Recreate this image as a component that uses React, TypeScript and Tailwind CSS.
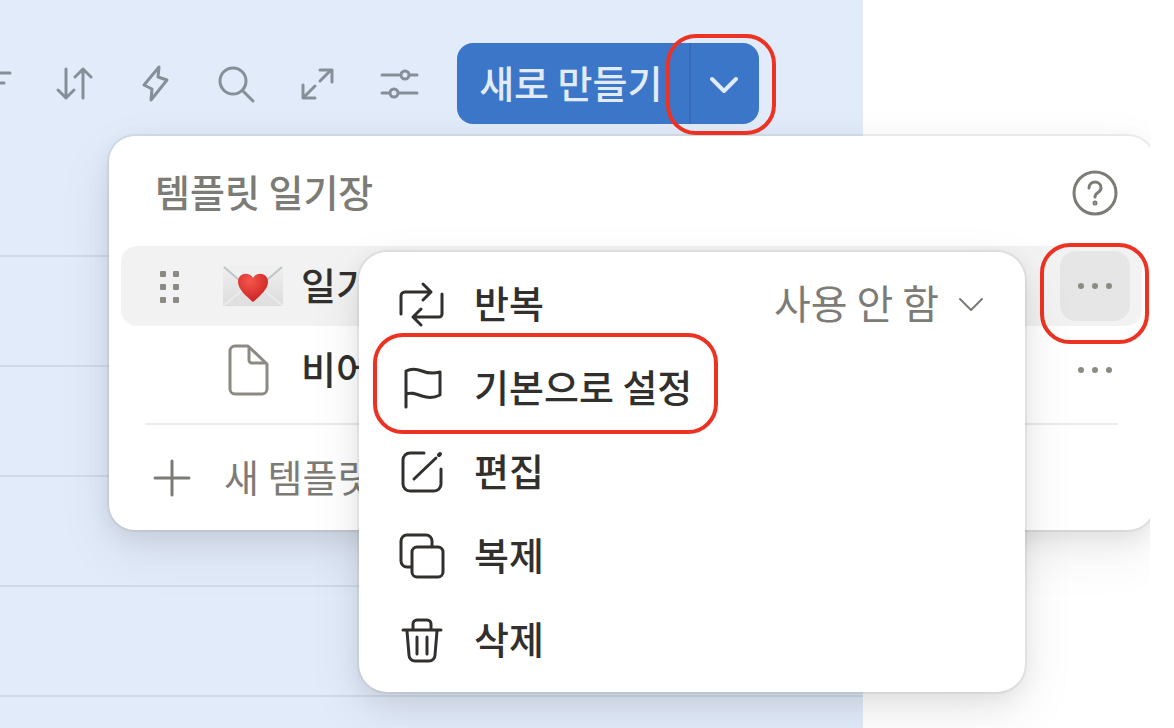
import { ReactNode } from "react";
import clsx from "clsx";

interface IconProps {
  size?: number;
  width?: number;
  className?: string;
  children: ReactNode;
}

const Icon = ({ size = 44, width = 3, className, children }: IconProps) => (
  <svg
    width={size}
    height={size}
    viewBox={`0 0 ${size} ${size}`}
    fill="none"
    stroke="currentColor"
    strokeWidth={width}
    strokeLinecap="round"
    strokeLinejoin="round"
    aria-hidden="true"
    className={clsx("shrink-0 overflow-visible", className)}
  >
    {children}
  </svg>
);

const toolbarItems = [
  { label: "필터", icon: <path d="M4 8h37M11 18h24M17 28h12" /> },
  {
    label: "정렬",
    icon: <path d="M15 4v29M7 25l8 8 8-8M32 33V4M24 12l8-8 8 8" />,
  },
  {
    label: "자동화",
    icon: <path d="M26 2L11 20l8 4-1 11 16-20-9-3z" />,
  },
  {
    label: "검색",
    icon: (
      <>
        <circle cx="18" cy="16" r="13" />
        <path d="M28 26l10 10" />
      </>
    ),
  },
  {
    label: "확대",
    icon: <path d="M23 16L34 5M23 5h12v12M18 21L7 32M6 20v13h12" />,
  },
  {
    label: "설정",
    icon: (
      <>
        <path d="M3 10h17M31 10h7M3 28h6M20 28h18" />
        <circle cx="26" cy="10" r="4" />
        <circle cx="15" cy="28" r="4" />
      </>
    ),
  },
];

const menuItems = [
  {
    label: "반복",
    value: "사용 안 함",
    icon: (
      <path d="M2 33V15a4 4 0 0 1 4-4h26M24 3l8 8-8 8M43 13v20a3 3 0 0 1-3 3H14M22 28l-8 8 8 8" />
    ),
  },
  {
    label: "기본으로 설정",
    marked: true,
    icon: (
      <path d="M7 42V6c6-3 11-2 16 0s11 3 18 1v23c-6 3-12 3-18 1s-10-4-16-2" />
    ),
  },
  {
    label: "편집",
    icon: (
      <>
        <path d="M25 4H11a7 7 0 0 0-7 7v24a7 7 0 0 0 7 7h24a7 7 0 0 0 7-7V20" />
        <path d="M15 30L37 9" />
        <path d="M40 6l1-1" strokeWidth="4" />
      </>
    ),
  },
  {
    label: "복제",
    icon: (
      <>
        <rect x="13" y="14" width="31" height="30" rx="5" />
        <path d="M33 13V8a6 6 0 0 0-6-6H8a6 6 0 0 0-6 6v20a6 6 0 0 0 6 6h4" />
      </>
    ),
  },
  {
    label: "삭제",
    icon: (
      <>
        <path d="M4 13h38M14 12V7a4 4 0 0 1 4-4h10a4 4 0 0 1 4 4v5" />
        <path d="M8 14l2 24a6 6 0 0 0 6 6h14a6 6 0 0 0 6-6l2-24M18 20v17M28 20v17" />
      </>
    ),
  },
];

const Highlight = ({ className }: { className: string }) => (
  <span
    className={clsx(
      "pointer-events-none absolute rounded-[30px] border-4 border-[#ec3323]",
      className,
    )}
  />
);

const LoveLetter = () => (
  <svg width="60" height="40" viewBox="0 0 60 40" aria-hidden="true">
    <defs>
      <radialGradient id="heart" cx="40%" cy="25%" r="80%">
        <stop offset="0" stopColor="#f4564c" />
        <stop offset="1" stopColor="#c9201f" />
      </radialGradient>
      <linearGradient id="paper" x1="0" y1="0" x2="0" y2="1">
        <stop offset="0" stopColor="#efefef" />
        <stop offset="1" stopColor="#dcdcdc" />
      </linearGradient>
    </defs>
    <rect width="60" height="40" rx="1" fill="url(#paper)" />
    <path d="M1 39l21-17h16l21 17z" fill="#e0e0e0" />
    <path d="M1 39l20-16M59 39L39 23" stroke="#ebebeb" strokeWidth="2" />
    <path d="M1 1l29 25L59 1z" fill="#f0f0f0" />
    <path d="M1 1l29 25L59 1" fill="none" stroke="#bfc6ca" strokeWidth="2" />
    <path
      d="M30 36C23 30 15 23 15 16c0-9 11-11 15-4 4-7 15-5 15 4 0 7-8 14-15 20z"
      fill="url(#heart)"
    />
  </svg>
);

const Dots = () => (
  <Icon size={36} className="text-[#8d8a84]">
    <g fill="currentColor" stroke="none">
      <circle cx="4" cy="18" r="3" />
      <circle cx="18" cy="18" r="3" />
      <circle cx="32" cy="18" r="3" />
    </g>
  </Icon>
);

const TemplatePanel = () => (
  <section className="absolute top-[136px] -right-1 left-[109px] z-10 rounded-[26px] bg-white p-3 text-[#7d7b75] shadow-[0_0_0_2px_rgba(84,72,49,0.08),0_8px_24px_rgba(15,15,15,0.08),0_20px_56px_rgba(15,15,15,0.08)]">
    <header className="flex h-[90px] items-center justify-between pr-[25px] pl-[34px]">
      <h2 className="pb-1 font-medium">템플릿 일기장</h2>
      <button type="button" aria-label="도움말">
        <Icon>
          <circle cx="22" cy="22" r="21" />
          <path d="M16 17c0-8 12-8 12 0 0 5-6 4-6 9" />
          <circle cx="22" cy="32" r="1" />
        </Icon>
      </button>
    </header>
    <ul className="mt-2 flex flex-col gap-1">
      <li className="flex h-20 items-center rounded-2xl bg-[#f2f2f2] pr-3 pl-[38px]">
        <Icon size={22} className="mr-[42px] text-[#8d8a84]">
          <g fill="currentColor" stroke="none">
            {[-4, 9, 22].map((y) => (
              <g key={y}>
                <rect x="1" y={y} width="6" height="6" rx="1" />
                <rect x="14" y={y} width="6" height="6" rx="1" />
              </g>
            ))}
          </g>
        </Icon>
        <LoveLetter />
        <span className="ml-[18px] flex-1 pb-1 font-medium text-[#32302c]">
          일기
        </span>
        <button
          type="button"
          aria-label="일기 옵션"
          className="relative flex size-[70px] items-center justify-center rounded-2xl bg-[#e6e6e6]"
        >
          <Dots />
          <Highlight className="-top-2 -right-[19px] -bottom-[23px] -left-5" />
        </button>
      </li>
      <li className="flex h-20 items-center pr-3 pl-[102px]">
        <svg
          width="60"
          height="52"
          viewBox="0 0 60 52"
          fill="none"
          stroke="#8d8a84"
          strokeWidth="3"
          strokeLinejoin="round"
          aria-hidden="true"
        >
          <path d="M12 2h13l19 18v25a5 5 0 0 1-5 5H12a5 5 0 0 1-5-5V7a5 5 0 0 1 5-5z" />
          <path d="M26 3v13a3 3 0 0 0 3 3h14" />
        </svg>
        <span className="ml-[18px] flex-1 pb-1 font-medium text-[#32302c]">
          비어 있음
        </span>
        <button
          type="button"
          aria-label="비어 있음 옵션"
          className="flex size-[70px] items-center justify-center"
        >
          <Dots />
        </button>
      </li>
    </ul>
    <hr className="mx-6 my-[13px] border-t-2 border-[#ebebea]" />
    <button type="button" className="flex h-20 w-full items-center pl-[33px]">
      <Icon size={36}>
        <path d="M18 1v34M1 18h34" />
      </Icon>
      <span className="ml-[34px] pb-1">새 템플릿</span>
    </button>
  </section>
);

const ContextMenu = () => (
  <div
    role="menu"
    className="absolute top-[252px] right-[125px] left-[359px] z-20 rounded-[28px] bg-white py-[10px] text-[#32302c] shadow-[0_0_0_2px_rgba(84,72,49,0.08),0_8px_24px_rgba(15,15,15,0.08),0_20px_56px_rgba(15,15,15,0.08)]"
  >
    {menuItems.map((item) => (
      <button
        key={item.label}
        type="button"
        role="menuitem"
        className="relative flex h-[84px] w-full items-center px-10"
      >
        <Icon size={46}>{item.icon}</Icon>
        <span className="ml-[29px] pb-1 font-medium">{item.label}</span>
        {item.value && (
          <span className="ml-auto flex items-center gap-[18px] text-[#7d7b75]">
            <span className="pb-1 text-[40px]">{item.value}</span>
            <Icon size={28} width={2}>
              <path d="M3 9l11 11L25 9" />
            </Icon>
          </span>
        )}
        {item.marked && (
          <Highlight className="-top-[13px] -bottom-1 left-[14px] w-[345px]" />
        )}
      </button>
    ))}
  </div>
);

const App = () => {
  return (
    <main className="h-screen overflow-hidden bg-white pr-6 font-['Noto_Sans_CJK_KR',sans-serif] text-[38px] leading-[56px] whitespace-nowrap">
      <div className="relative h-full overflow-hidden">
        <section className="flex h-full w-3/4 flex-col bg-[#e2ebfa]">
          <div className="flex h-[147px] shrink-0 items-start justify-end pt-[43px] pr-[104px]">
            <div className="mr-10 flex h-[81px] items-center gap-11 text-[#868f97]">
              {toolbarItems.map((item) => (
                <button key={item.label} type="button" aria-label={item.label}>
                  <Icon size={38}>{item.icon}</Icon>
                </button>
              ))}
            </div>
            <div className="relative z-30 flex h-[81px] text-[#e2ebfa]">
              <button
                type="button"
                className="rounded-l-2xl border-r-2 border-[#386bb5] bg-[#3c76c9] pr-[26px] pb-1 pl-[22px] font-medium"
              >
                새로 만들기
              </button>
              <button
                type="button"
                aria-label="템플릿 선택"
                className="relative flex w-[68px] items-center justify-center rounded-r-2xl bg-[#3c76c9]"
              >
                <Icon size={30} width={4}>
                  <path d="M2 10l12 12L26 10" />
                </Icon>
                <Highlight className="-top-[9px] -right-[17px] -bottom-[11px] -left-[25px]" />
              </button>
            </div>
          </div>
          {Array.from({ length: 5 }, (_, i) => (
            <div
              key={i}
              className="h-[110px] shrink-0 border-b-2 border-[#d0dbea]"
            />
          ))}
        </section>
        <TemplatePanel />
        <ContextMenu />
      </div>
    </main>
  );
};

export default App;
